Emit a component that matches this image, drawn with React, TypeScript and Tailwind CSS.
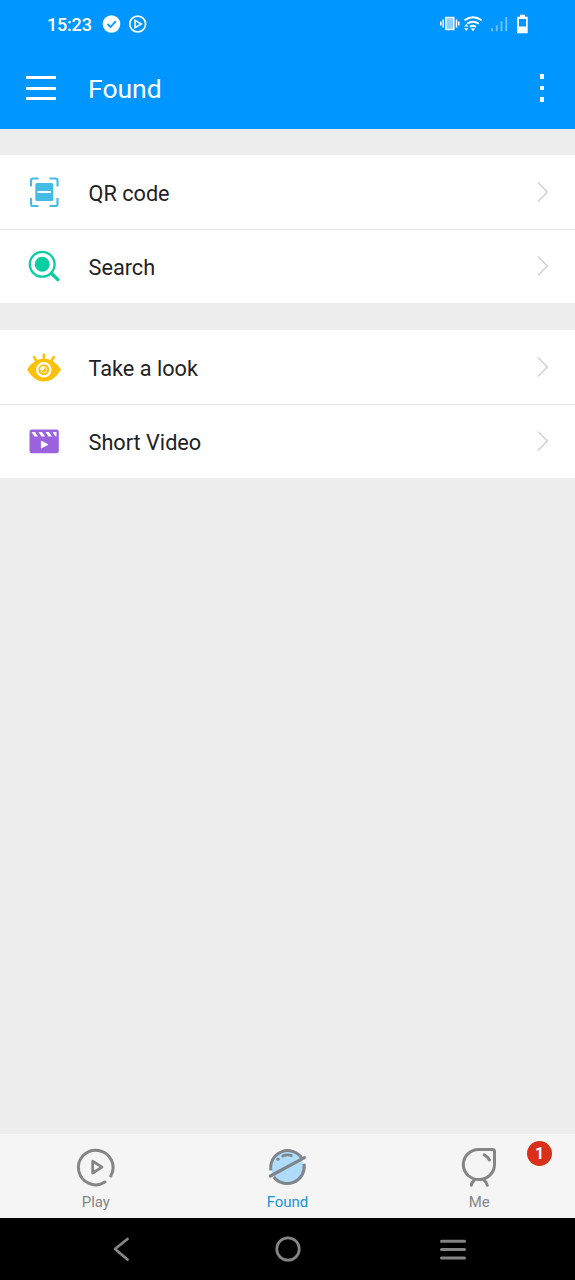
import React, { useState } from 'react';
import clsx from 'clsx';

type IconProps = { active?: boolean };

function QrIcon() {
  return (
    <svg width="36" height="36" viewBox="0 0 36 36" fill="none">
      <path
        d="M5 12.5V6.5Q5 4.5 7 4.5H12.5M23.5 4.5H29.5Q31.5 4.5 31.5 6.5V12.5M31.5 24V30Q31.5 32 29.5 32H23.5M12.5 32H7Q5 32 5 30V24"
        stroke="#45BCE5"
        strokeWidth="2.2"
      />
      <rect x="9.3" y="9" width="18" height="18" rx="1.5" fill="#45BCE5" />
      <path d="M11.5 18H25" stroke="#fff" strokeWidth="2" />
    </svg>
  );
}

function SearchIcon() {
  return (
    <svg width="36" height="36" viewBox="0 0 36 36" fill="none">
      <circle cx="16.2" cy="16.3" r="12.4" stroke="#0BCDA2" strokeWidth="2.3" />
      <circle cx="16.2" cy="16.3" r="7.5" fill="#0BCDA2" />
      <path d="M25.5 25.5L31.8 31.5" stroke="#0BCDA2" strokeWidth="3.3" strokeLinecap="round" />
    </svg>
  );
}

function EyeIcon() {
  return (
    <svg width="36" height="36" viewBox="0 0 36 36" fill="none">
      <path d="M1 20.5Q8 9.5 18 9.5T35 20.5Q28 32.5 18 32.5T1 20.5Z" fill="#FDC009" />
      <path
        d="M17.8 5.5V11M8 8L10.5 12M27.8 8L25.3 12"
        stroke="#FDC009"
        strokeWidth="2.5"
        strokeLinecap="round"
      />
      <circle cx="17.8" cy="20.7" r="6.6" stroke="#fff" strokeWidth="2.3" />
      <circle cx="17.8" cy="20.7" r="3.1" stroke="#fff" strokeWidth="0.8" />
      <circle cx="16.4" cy="19.3" r="2" fill="#fff" />
    </svg>
  );
}

function ClapperIcon() {
  return (
    <svg width="36" height="36" viewBox="0 0 36 36" fill="none">
      <rect x="3.5" y="6.5" width="29.3" height="23.8" rx="2.5" fill="#9A62DD" />
      <path
        d="M5.5 9H9L12 13.5H8.5ZM12.5 9H16L19 13.5H15.5ZM19.5 9H23L26 13.5H22.5ZM26.5 9H30.5V13.5H29.5Z"
        fill="#fff"
      />
      <path d="M15.3 18V25.2L22 21.6Z" fill="#fff" stroke="#fff" strokeWidth="0.6" strokeLinejoin="round" />
    </svg>
  );
}

function PlayTabIcon() {
  return (
    <svg width="44" height="44" viewBox="0 0 44 44" fill="none" stroke="#858585" strokeLinecap="round">
      <path d="M31 37.1A17.3 17.3 0 1 1 36.8 31" strokeWidth="3" />
      <path d="M18.7 16.2V28L28 22.1Z" strokeWidth="2.8" strokeLinejoin="round" />
    </svg>
  );
}

function FoundTabIcon({ active }: IconProps) {
  return (
    <svg width="44" height="44" viewBox="0 0 44 44" fill="none" stroke="#7F858B" strokeLinecap="round">
      <circle cx="22.3" cy="22" r="16" fill={active ? '#AFDCFB' : 'none'} stroke="none" />
      {/* Rim is broken where the ring crosses it */}
      <path d="M5.9 25.5A17 17 0 0 1 36.8 13.2" strokeWidth="3" strokeLinecap="butt" />
      <path d="M39 18.8A17 17 0 0 1 8.8 32" strokeWidth="3" strokeLinecap="butt" />
      <path d="M5.4 31L39.4 12.6" strokeWidth="3.2" />
      <path d="M17.8 11Q22 9 26.3 10.5" strokeWidth="2.9" />
      <circle cx="13" cy="14.2" r="1.6" fill="#7F858B" stroke="none" />
    </svg>
  );
}

function MeTabIcon() {
  return (
    <svg width="44" height="44" viewBox="0 0 44 44" fill="none" stroke="#858585" strokeLinecap="round">
      <path
        d="M21.8 4.4H35.3Q37.5 4.4 37.5 6.6V19.5A15.6 15.1 0 1 1 21.8 4.4Z"
        strokeWidth="3"
        strokeLinejoin="round"
      />
      <path d="M17.3 35.3Q14.8 37 14.3 40.2M27.1 35.3Q29.6 37 30.3 40.2" strokeWidth="3" />
      <path d="M27.2 9.8Q30.5 11.4 32.5 15" strokeWidth="3" />
    </svg>
  );
}

function StatusBar() {
  return (
    <div className="h-12 flex items-center justify-between pl-[47px] pr-[46px]">
      <div className="flex items-center">
        <span className="w-[55px] pt-px text-[18px] leading-none font-medium tracking-[-0.2px]">15:23</span>
        <svg width="46" height="20" viewBox="0 0 46 20" fill="none">
          <circle cx="9.5" cy="10" r="8.8" fill="#fff" />
          <path d="M5.5 10L8.5 13L13.8 7.2" stroke="#0096FF" strokeWidth="1.8" />
          <circle cx="35.7" cy="10" r="7.9" stroke="#fff" strokeWidth="1.7" />
          <path d="M33 6.3V13.7L39.3 10Z" stroke="#fff" strokeWidth="1.5" />
        </svg>
      </div>
      <svg width="90" height="22" viewBox="0 0 90 22" fill="none">
        {/* Vibrate */}
        <rect x="6.8" y="4.5" width="8" height="12" fill="#fff" fillOpacity="0.55" stroke="#fff" strokeWidth="1.4" />
        <path d="M4.2 6.5V14.5M17.5 6.5V14.5M1.8 8.5V12.5M19.8 8.5V12.5" stroke="#fff" strokeWidth="1.5" />
        {/* Wifi */}
        <path
          d="M25.5 7.3Q34 1.2 42.6 7.3M28.2 10.7Q34 6.6 39.8 10.7M31 13.8Q34 11.9 37 13.8"
          stroke="#fff"
          strokeWidth="2"
        />
        <path d="M31.7 15.5H36.2L34 18.3Z" fill="#fff" />
        <path d="M25.2 13.5L27.3 11L29.4 13.5ZM25.2 15.3L27.3 18L29.4 15.3Z" fill="#fff" />
        {/* Signal */}
        <path d="M53 15.3V18.3M57.8 12.3V18.3M62.5 8.3V18.3M67.2 4V18.3" stroke="#69C1FF" strokeWidth="2" />
        {/* Battery */}
        <path d="M81 1.8H86V3.8H88.7V20.2H78.2V3.8H81Z" fill="#fff" />
        <rect x="80" y="6" width="7" height="7.5" fill="#0096FF" />
      </svg>
    </div>
  );
}

function Header() {
  return (
    <header className="h-[129px] bg-[#0096FF] text-white">
      <StatusBar />
      <div className="h-20 flex items-center pl-[26px] pr-[31px]">
        <button className="w-[30px] flex flex-col gap-[7.5px]" aria-label="Menu">
          <span className="h-[3px] w-full bg-white" />
          <span className="h-[3px] w-full bg-white" />
          <span className="h-[3px] w-full bg-white" />
        </button>
        <h1 className="ml-8 pt-0.5 flex-1 text-[26.5px] leading-none">Found</h1>
        <button className="flex flex-col gap-[7px]" aria-label="More">
          <span className="size-[4.5px] bg-white" />
          <span className="size-[4.5px] bg-white" />
          <span className="size-[4.5px] bg-white" />
        </button>
      </div>
    </header>
  );
}

function ListRow({ icon, label }: { icon: React.ReactNode; label: string }) {
  return (
    <button className="w-full h-[74px] flex items-center pl-[26px] pr-[26px] text-left">
      {icon}
      <span className="ml-[26.5px] pt-[3px] flex-1 text-[21.7px] leading-none text-[#222]">{label}</span>
      <svg width="12" height="22" viewBox="0 0 12 22" fill="none">
        <path d="M1 1.5L10.3 11L1 20.5" stroke="#D2D2D2" strokeWidth="1.5" />
      </svg>
    </button>
  );
}

const groups = [
  [
    { label: 'QR code', icon: <QrIcon /> },
    { label: 'Search', icon: <SearchIcon /> },
  ],
  [
    { label: 'Take a look', icon: <EyeIcon /> },
    { label: 'Short Video', icon: <ClapperIcon /> },
  ],
];

const tabs = [
  { label: 'Play', Icon: PlayTabIcon, badge: 0 },
  { label: 'Found', Icon: FoundTabIcon, badge: 0 },
  { label: 'Me', Icon: MeTabIcon, badge: 1 },
];

export default function App() {
  const [activeTab, setActiveTab] = useState('Found');

  return (
    <div className="h-screen flex flex-col bg-[#EDEDED] font-[Roboto,sans-serif] overflow-hidden">
      <Header />

      <main className="flex-1 pt-[26px] flex flex-col gap-[27px]">
        {groups.map((rows, i) => (
          <section key={i} className="h-[148px] bg-white">
            {rows.map((row, j) => (
              <React.Fragment key={row.label}>
                {j > 0 && <div className="h-px -mb-px bg-[#E4E4E4]" />}
                <ListRow icon={row.icon} label={row.label} />
              </React.Fragment>
            ))}
          </section>
        ))}
      </main>

      {/* Bottom tabs */}
      <nav className="h-[84px] grid grid-cols-3 bg-[#F5F5F5]">
        {tabs.map(({ label, Icon, badge }) => (
          <button
            key={label}
            onClick={() => setActiveTab(label)}
            className="relative flex flex-col items-center pt-[11px]"
          >
            <Icon active={activeTab === label} />
            <span
              className={clsx(
                'mt-1.5 text-[15px] leading-none',
                activeTab === label ? 'text-[#1296DB]' : 'text-[#858585]'
              )}
            >
              {label}
            </span>
            {badge > 0 && (
              <span className="absolute top-[7px] right-[23px] size-[25px] rounded-full bg-[#D9301A] text-white text-[16px] font-bold flex items-center justify-center">
                {badge}
              </span>
            )}
          </button>
        ))}
      </nav>

      {/* System navigation */}
      <div className="h-[62px] bg-black flex items-center justify-between pl-[112px] pr-[109px]">
        <svg className="w-[26px]" height="26" viewBox="0 0 26 26" fill="none">
          <path d="M15.5 3L3 13L15.5 23.5" stroke="#858585" strokeWidth="2.8" strokeLinecap="round" strokeLinejoin="round" />
        </svg>
        <svg className="-ml-[3px]" width="26" height="26" viewBox="0 0 26 26" fill="none">
          <circle cx="13" cy="13" r="11.2" stroke="#858585" strokeWidth="2.8" />
        </svg>
        <svg width="26" height="26" viewBox="0 0 26 26" fill="none">
          <path d="M1.5 5.3H24.5M1.5 13.5H24.5M1.5 22H24.5" stroke="#858585" strokeWidth="3" strokeLinecap="round" />
        </svg>
      </div>
    </div>
  );
}
